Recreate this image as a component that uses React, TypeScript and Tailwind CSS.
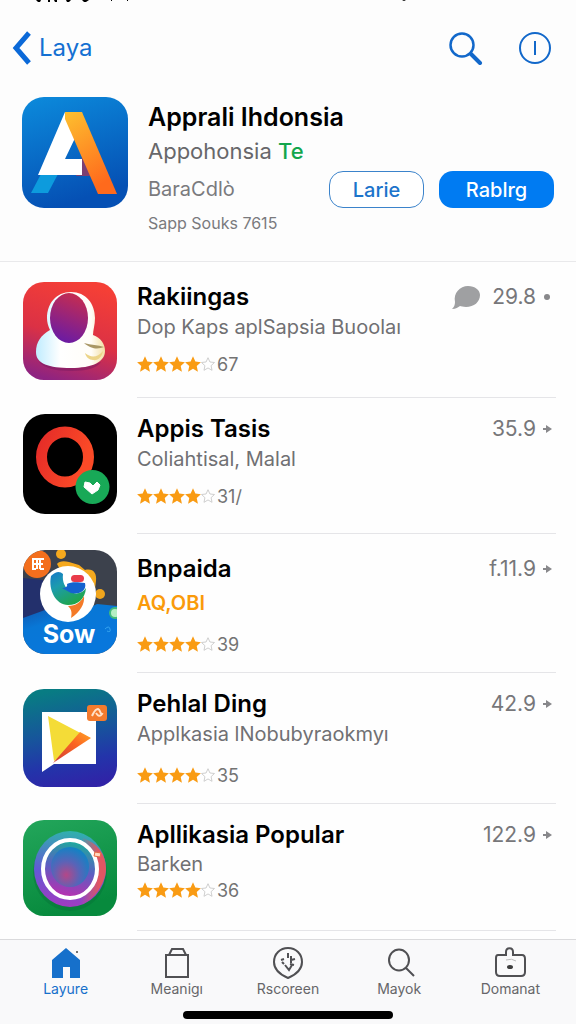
import type { ReactNode } from "react";
import clsx from "clsx";

type AppEntry = {
  name: string;
  description: string;
  count: string;
  value: string;
  icon: ReactNode;
  rowClass: string;
  bodyClass: string;
  ratingClass: string;
  descriptionClass?: string;
  hasComment?: boolean;
};

const STAR = "M8 0.8l2.2 4.9 5.2.6-3.9 3.6 1.1 5.3L8 12.5l-4.6 2.7 1.1-5.3L.6 6.3l5.2-.6z";

const StoreLogo = () => (
  <svg viewBox="0 0 106 111" className="w-[106px] shrink-0" aria-hidden="true">
    <defs>
      <linearGradient id="store-bg" x1="0" y1="0" x2="0.3" y2="1">
        <stop offset="0" stopColor="#0c8bdc" />
        <stop offset="1" stopColor="#0550b4" />
      </linearGradient>
      <linearGradient id="store-bar" x1="0" y1="0" x2="0.4" y2="1">
        <stop offset="0" stopColor="#fdc02f" />
        <stop offset="1" stopColor="#ff6a1c" />
      </linearGradient>
    </defs>
    <rect width="106" height="111" rx="22" fill="url(#store-bg)" />
    <path d="M19 77h17L26 96H9z" fill="#0d9bdd" />
    <path d="M60 60l9 19H54z" fill="#7b3f72" />
    <path d="M43 15h9l2 24-11 23h17v16H16z" fill="#fff" />
    <path d="M43 15h17l35 82H76L43 22z" fill="url(#store-bar)" />
  </svg>
);

const ProfileAppIcon = () => (
  <svg viewBox="0 0 94 98" className="w-[94px] shrink-0" aria-hidden="true">
    <defs>
      <linearGradient id="profile-bg" x1="0.6" y1="0" x2="0.3" y2="1">
        <stop offset="0" stopColor="#f53f36" />
        <stop offset="0.55" stopColor="#db3145" />
        <stop offset="1" stopColor="#8e2381" />
      </linearGradient>
      <linearGradient id="profile-face" x1="0.7" y1="0" x2="0.4" y2="1">
        <stop offset="0" stopColor="#c72d4f" />
        <stop offset="1" stopColor="#6a1ba4" />
      </linearGradient>
      <linearGradient id="profile-body">
        <stop offset="0" stopColor="#c0ecff" />
        <stop offset="0.35" stopColor="#fff" />
        <stop offset="0.8" stopColor="#fffdf8" />
        <stop offset="1" stopColor="#f3dfa3" />
      </linearGradient>
    </defs>
    <rect width="94" height="98" rx="21" fill="url(#profile-bg)" />
    <path d="M16 80q30 12 62 0-6 9-30 9t-32-9z" fill="#63155b" opacity="0.35" />
    <path
      d="M48 10c15 0 24 12 24 26 0 7-2 12-2 17 8 3 12 9 12 16 0 11-13 17-34 17-22 0-35-4-35-16 0-10 5-17 14-22-2-4-3-8-3-12 0-14 9-26 24-26z"
      fill="url(#profile-body)"
    />
    <ellipse cx="46" cy="36" rx="19" ry="25" fill="url(#profile-face)" />
    <path d="M61 61c7 2 14 2 20 4-5 2-12 3-20-4z" fill="#a99765" />
    <path d="M62 71c6 5 12 5 18-2-1 6-5 10-10 9-4 0-7-3-8-7z" fill="#ecd488" />
  </svg>
);

const RingAppIcon = () => (
  <svg viewBox="0 0 94 100" className="w-[94px] shrink-0" aria-hidden="true">
    <defs>
      <linearGradient id="ring-red" x1="0" y1="0" x2="1" y2="0.4">
        <stop offset="0" stopColor="#e52c28" />
        <stop offset="1" stopColor="#fb4a27" />
      </linearGradient>
    </defs>
    <rect width="94" height="100" rx="22" fill="#000" />
    <ellipse cx="42" cy="43" rx="23.500" ry="25" fill="none" stroke="url(#ring-red)" strokeWidth="11" />
    <circle cx="69.500" cy="73" r="17" fill="#18a957" />
    <path d="M62 68l5 1 3 3 4-4 3 3-2 5-6 4-8-7z" fill="#fff" stroke="#fff" strokeLinejoin="round" />
  </svg>
);

const SowAppIcon = () => (
  <svg viewBox="0 0 94 104" className="w-[94px] shrink-0" role="img" aria-label="Sow">
    <defs>
      <clipPath id="sow-clip">
        <rect width="94" height="104" rx="22" />
      </clipPath>
      <linearGradient id="sow-sea" x1="0" y1="0" x2="0.5" y2="1">
        <stop offset="0" stopColor="#173f92" />
        <stop offset="0.5" stopColor="#0877d6" />
        <stop offset="1" stopColor="#0877dc" />
      </linearGradient>
      <linearGradient id="sow-mark" x1="0" y1="0" x2="0.6" y2="1">
        <stop offset="0" stopColor="#1678c8" />
        <stop offset="0.4" stopColor="#1c9bae" />
        <stop offset="1" stopColor="#20a64a" />
      </linearGradient>
    </defs>
    <g clipPath="url(#sow-clip)">
      <rect width="94" height="104" fill="#3c414c" />
      <path d="M0 42l24 12 34 8 16-8 20 2v48H0z" fill="url(#sow-sea)" />
      <path d="M0 28l20 2 2 30-22 8z" fill="#23306c" />
      <circle cx="38" cy="4" r="5" fill="#f5a91e" />
      <path d="M34 14q3-4 12-2l10 3 6 5c8-2 12 3 11 11l-2 16-30-20z" fill="#f5a91e" />
      <circle cx="77" cy="44" r="5" fill="#f0a51d" />
      <circle cx="14" cy="14" r="14" fill="#f36f1d" />
      <circle cx="45" cy="44" r="28" fill="#fff" />
      <path d="M28 26c5-5 9-5 12-2-1 8 2 14 8 18 5 3 12 1 15-4-1 11-8 17-18 17-12 0-20-15-17-29z" fill="url(#sow-mark)" />
      <path d="M44 34c4-2 9-2 18-1 2 7-5 12-14 10l-9-5c3 0 6-1 5-4z" fill="#1463cf" />
      <rect x="48" y="25" width="13" height="7" rx="3.500" fill="#e93c4a" />
      <path d="M61 46c1 8-4 16-13 22 1-5 1-8-3-12 8 0 13-4 16-10z" fill="#f47a28" />
      <circle cx="92" cy="63" r="5" fill="#b5eec4" stroke="#42bb7b" strokeWidth="2" />
      <path d="M82 79q4-4 5 0t-3 2" fill="none" stroke="#36a5ef" strokeWidth="1" />
      <path d="M9 9h12M10 9v10M14 9v10M9 14h11M17 9v10M9 19h4M17 19h4" fill="none" stroke="#fff" strokeWidth="2" />
      <text x="46" y="93" textAnchor="middle" fill="#fff" fontFamily="Inter, sans-serif" fontWeight="700" fontSize="25">
        Sow
      </text>
    </g>
  </svg>
);

const PlayAppIcon = () => (
  <svg viewBox="0 0 94 98" className="w-[94px] shrink-0" aria-hidden="true">
    <defs>
      <linearGradient id="play-bg" x1="0.4" y1="0" x2="0.6" y2="1">
        <stop offset="0" stopColor="#087c83" />
        <stop offset="0.45" stopColor="#17549c" />
        <stop offset="0.75" stopColor="#2334aa" />
        <stop offset="1" stopColor="#3023a7" />
      </linearGradient>
      <linearGradient id="play-fold" x1="1" y1="0" x2="0" y2="1">
        <stop offset="0" stopColor="#ffa126" />
        <stop offset="0.4" stopColor="#fb6522" />
        <stop offset="1" stopColor="#ce3c38" />
      </linearGradient>
    </defs>
    <rect width="94" height="98" rx="21" fill="url(#play-bg)" />
    <path d="M19 23h54v52H31L19 83z" fill="#fff" />
    <path d="M25 27l42 22-14 8-22 15z" fill="#f4dc37" />
    <path d="M57 43l11 6-38 25z" fill="url(#play-fold)" />
    <rect x="64" y="16" width="20" height="16" rx="3" fill="#f47b2d" />
    <path d="M69 27c2-4 3-7 6-7 3 1 1 4 4 5-2 3-4 2-6-1" fill="none" stroke="#ffe2ca" strokeWidth="2" />
  </svg>
);

const LensAppIcon = () => (
  <svg viewBox="0 0 94 96" className="w-[94px] shrink-0" aria-hidden="true">
    <defs>
      <linearGradient id="lens-bg" x1="0" y1="0" x2="0.3" y2="1">
        <stop offset="0" stopColor="#23a65b" />
        <stop offset="1" stopColor="#078a3d" />
      </linearGradient>
      <linearGradient id="lens-left" x1="0.5" y1="0" x2="0.4" y2="1">
        <stop offset="0" stopColor="#2fb1ad" />
        <stop offset="0.55" stopColor="#6359d6" />
        <stop offset="1" stopColor="#a13ac0" />
      </linearGradient>
      <linearGradient id="lens-right" x1="0.3" y1="0" x2="0.8" y2="0">
        <stop offset="0" stopColor="#e15663" stopOpacity="0" />
        <stop offset="1" stopColor="#e15663" />
      </linearGradient>
      <linearGradient id="lens-inner" x1="0.6" y1="0" x2="0.4" y2="1">
        <stop offset="0" stopColor="#1bae9b" />
        <stop offset="0.5" stopColor="#5b5fc2" />
        <stop offset="1" stopColor="#bd2daf" />
      </linearGradient>
      <radialGradient id="lens-core" cx="0.4" cy="0.7" r="0.7">
        <stop offset="0" stopColor="#b44788" />
        <stop offset="0.5" stopColor="#5864b8" />
        <stop offset="1" stopColor="#1482c4" />
      </radialGradient>
    </defs>
    <rect width="94" height="96" rx="21" fill="url(#lens-bg)" />
    <ellipse cx="47" cy="52" rx="37" ry="39" fill="#066b36" opacity="0.35" />
    <ellipse cx="47" cy="49" rx="36" ry="38" fill="url(#lens-left)" />
    <path d="M60 18c14 5 23 16 23 31S68 87 47 87z" fill="url(#lens-right)" />
    <ellipse cx="47" cy="49" rx="27" ry="29" fill="url(#lens-inner)" stroke="#fff" strokeWidth="4" />
    <ellipse cx="47" cy="47" rx="19" ry="20" fill="url(#lens-core)" />
    <path d="M72 32l6 1-1 4-6-1z" fill="#ffd7c0" stroke="#e5683f" strokeWidth="1" />
  </svg>
);

const apps: AppEntry[] = [
  {
    name: "Rakiingas",
    description: "Dop Kaps aplSapsia Buoolaı",
    count: "67",
    value: "29.8",
    icon: <ProfileAppIcon />,
    rowClass: "pt-5",
    bodyClass: "pb-[21px]",
    ratingClass: "mt-[10px]",
    hasComment: true,
  },
  {
    name: "Appis Tasis",
    description: "Coliahtisal, Malal",
    count: "31/",
    value: "35.9",
    icon: <RingAppIcon />,
    rowClass: "pt-4",
    bodyClass: "pb-[25px]",
    ratingClass: "mt-[10px]",
  },
  {
    name: "Bnpaida",
    description: "AQ,OBI",
    count: "39",
    value: "f.11.9",
    icon: <SowAppIcon />,
    rowClass: "pt-4",
    bodyClass: "pt-1 pb-4",
    ratingClass: "mt-[14px]",
    descriptionClass: "mt-1 leading-[30px] font-semibold text-[#fa9a0a]",
  },
  {
    name: "Pehlal Ding",
    description: "Applkasia lNobubyraokmyı",
    count: "35",
    value: "42.9",
    icon: <PlayAppIcon />,
    rowClass: "pt-4",
    bodyClass: "pb-4",
    ratingClass: "mt-[14px]",
  },
  {
    name: "Apllikasia Popular",
    description: "Barken",
    count: "36",
    value: "122.9",
    icon: <LensAppIcon />,
    rowClass: "pt-4",
    bodyClass: "pb-7",
    ratingClass: "mt-0",
    descriptionClass: "leading-7 text-[#707073]",
  },
];

const Rating = ({ count, className }: { count: string; className: string }) => (
  <div className={clsx("flex h-6 items-center", className)}>
    {[0, 1, 2, 3].map((star) => (
      <svg key={star} viewBox="0.5 0.5 15 15" className="size-4 fill-[#f99b13]" aria-hidden="true">
        <path d={STAR} />
      </svg>
    ))}
    <svg viewBox="0 0 16 16" className="size-[14px] fill-white stroke-[#c8c8c8]" aria-hidden="true">
      <path d={STAR} />
    </svg>
    <span className="ml-[2px] text-[18px] text-[#737373]">{count}</span>
  </div>
);

const AppRow = ({ app }: { app: AppEntry }) => (
  <li className={clsx("flex items-start gap-5 pr-5 pl-[23px]", app.rowClass)}>
    {app.icon}
    <div className={clsx("min-w-0 flex-1 border-b border-[#e5e5e8]", app.bodyClass)}>
      <div className="flex items-center justify-between">
        <h2 className="text-[24px] leading-[30px] font-semibold text-black">{app.name}</h2>
        <p className="flex items-center text-[21px] leading-[30px] text-[#77777a]">
          {app.hasComment && (
            <svg viewBox="0 0 28 24" className="mr-3 w-7 fill-[#9fa0a2]" aria-hidden="true">
              <path d="M16 1c7 0 12 4 12 9 0 7-6 12-14 12-3 0-5-1-6-1-2 1-4 3-8 3 2-2 3-4 3-7C1 8 8 1 16 1z" />
            </svg>
          )}
          {app.value}
          <svg viewBox="0 0 10 10" className="mr-1 ml-[6px] size-[10px] fill-[#88888b]" aria-hidden="true">
            {app.hasComment ? <circle cx="5" cy="5" r="3" /> : <path d="M1 4h3V1l6 4-6 4V6H1z" />}
          </svg>
        </p>
      </div>
      <p className={clsx("text-[20px]", app.descriptionClass ?? "leading-[30px] text-[#707073]")}>
        {app.description}
      </p>
      <Rating count={app.count} className={app.ratingClass} />
    </div>
  </li>
);

const tabs = [
  {
    label: "Layure",
    active: true,
    icon: (
      <>
        <path d="M2 13L16 1l14 12v18H20V20h-7v11H2z" fill="#1670cb" />
        <circle cx="27" cy="5" r="1" fill="#444" />
      </>
    ),
  },
  {
    label: "Meanigı",
    icon: <path d="M5 8h22v22H5zM8 8l3-6h11l3 6" />,
  },
  {
    label: "Rscoreen",
    icon: (
      <>
        <path d="M16 1c8 0 14 6 14 14S23 28 16 31C9 28 2 23 2 15S8 1 16 1z" />
        <path d="M16 6v5M13 18l4 5 3-5M9 13l3-1M10 15l2 2M19 9v7M19 13l4-1M18 17l4 1" strokeWidth="2" />
      </>
    ),
  },
  {
    label: "Mayok",
    icon: <path d="M6 13a10 10.500 0 1 0 20 0a10 10.500 0 1 0-20 0m17 8l8 8" />,
  },
  {
    label: "Domanat",
    icon: (
      <>
        <path d="M4 8h8V5c0-5 7-5 7 0v3h9q3 0 3 4v13q0 4-4 4H6q-4 0-4-4V11q0-3 2-3z" />
        <ellipse cx="16" cy="20" rx="3" ry="2" fill="#3c3c3c" stroke="none" />
        <path d="M12 13q6-2 10 1" stroke="#bbb" strokeWidth="1" />
      </>
    ),
  },
];

const App = () => (
  <div className="flex min-h-screen flex-col bg-[#fefefe] font-[Inter,sans-serif]">
    <header className="border-b border-[#e9e9eb] bg-[#fdfdfd] pb-[22px]">
      <svg viewBox="0 0 576 4" className="h-1 w-full fill-black" aria-hidden="true">
        <path d="M36 0h5l-1 2h-2zM48 0h2v2h-2zM54 0h3v2h-2zM66 0h5l-2 2h-2zM82 0h7l-3 2h-2zM111 0h1v1h-1zM127 0h1v1h-1zM402 0h4l-2 1z" />
      </svg>

      <div className="flex h-[88px] items-center justify-between pr-[25px] pl-3">
        <button type="button" className="flex items-center gap-2 text-[24px] text-[#1470d2]">
          <svg viewBox="0 0 19 34" className="w-[19px]" fill="none" stroke="#0b69d8" strokeWidth="5" aria-hidden="true">
            <path d="M17 2L4 17l13 15" />
          </svg>
          Laya
        </button>
        <div className="flex items-center gap-9">
          <button type="button" aria-label="Search">
            <svg viewBox="0 0 34 34" className="size-[34px]" fill="none" stroke="#1268ca" strokeLinecap="round" aria-hidden="true">
              <circle cx="13" cy="14" r="11.500" strokeWidth="2.500" />
              <path d="M22 23l9 9" strokeWidth="4" />
            </svg>
          </button>
          <button type="button" aria-label="Info">
            <svg viewBox="0 0 32 32" className="size-8" fill="none" stroke="#1268ca" strokeWidth="2" aria-hidden="true">
              <circle cx="16" cy="16" r="15" />
              <path d="M16 9v14" />
            </svg>
          </button>
        </div>
      </div>

      <section className="flex items-start gap-5 pt-[5px] pr-[22px] pl-[22px]">
        <StoreLogo />
        <div className="min-w-0 flex-1 pt-1">
          <h1 className="text-[25px] leading-8 font-semibold text-black">Apprali Ihdonsia</h1>
          <p className="text-[22px] leading-9 text-[#67676a]">
            Appohonsia <span className="font-medium text-[#13a64d]">Te</span>
          </p>
          <div className="flex items-start justify-between pt-[2px]">
            <div className="text-[#7a7a7d]">
              <p className="text-[20px] leading-9">BaraCdlò</p>
              <p className="text-[16px] leading-8">Sapp Souks 7615</p>
            </div>
            <div className="flex gap-[15px] text-[20px] font-medium">
              <button
                type="button"
                className="h-[37px] w-[95px] rounded-[14px] border border-[#3b83cb] bg-white text-[#1c74cb]"
              >
                Larie
              </button>
              <button type="button" className="h-[37px] w-[115px] rounded-[14px] bg-[#007bf2] text-white">
                Rablrg
              </button>
            </div>
          </div>
        </div>
      </section>
    </header>

    <main>
      <ul>
        {apps.map((app) => (
          <AppRow key={app.name} app={app} />
        ))}
      </ul>
    </main>

    <nav className="mt-auto border-t border-[#dadadc] bg-[#f9f9fa] px-[10px] pt-[7px] pb-[5px]">
      <div className="grid grid-cols-5">
        {tabs.map((tab) => (
          <button
            key={tab.label}
            type="button"
            className={clsx(
              "flex flex-col items-center text-[14px] leading-5",
              tab.active ? "text-[#1670cb]" : "text-[#666669]"
            )}
          >
            <svg viewBox="0 0 32 32" className="size-8" fill="none" stroke={tab.active ? "none" : "#505053"} strokeWidth="2" aria-hidden="true">
              {tab.icon}
            </svg>
            {tab.label}
          </button>
        ))}
      </div>
      <div className="mx-auto mt-3 h-2 w-[210px] rounded-full bg-black" />
    </nav>
  </div>
);

export default App;
